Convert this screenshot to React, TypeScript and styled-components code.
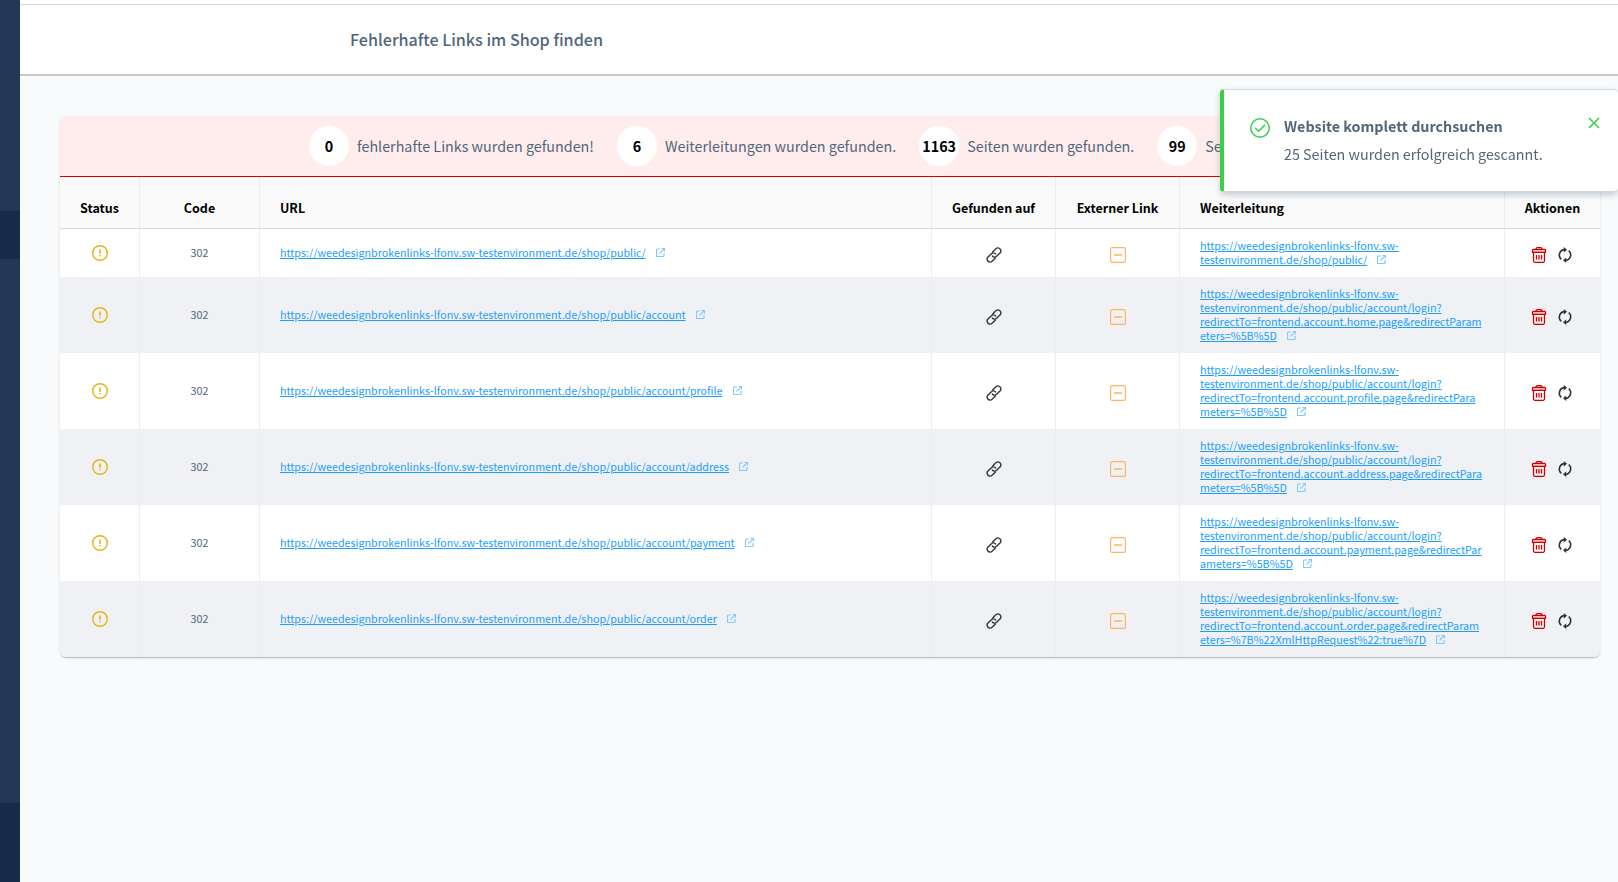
import React from 'react';
import styled, { createGlobalStyle, css } from 'styled-components';

const GlobalStyle = createGlobalStyle`
  *, *::before, *::after { box-sizing: border-box; }
  body {
    margin: 0;
    background: #f9fafb;
    color: #52667a;
    font-family: "Source Sans Pro", "Noto Sans CJK SC", sans-serif;
    font-size: 16px;
    font-size-adjust: 0.486;
    line-height: 20px;
  }
  button {
    font: inherit;
    border: 0;
    padding: 0;
    background: none;
    cursor: pointer;
  }
`;

const Shell = styled.div`
  display: flex;
  min-height: 100vh;
`;

const Sidebar = styled.nav`
  flex: none;
  display: flex;
  flex-direction: column;
  width: 20px;
  background: #243758;
`;

const SidebarGroup = styled.div`
  height: 211px;
`;

const SidebarActive = styled.div`
  height: 48px;
  background: #182b4d;
`;

const SidebarFooter = styled.div`
  height: 79px;
  margin-top: auto;
  background: #182b4d;
`;

const Main = styled.main`
  flex: 1;
  min-width: 0;
  background: #f9fafc;
`;

const SearchBar = styled.div`
  height: 5px;
  background: #fff;
  border-bottom: 1px solid #d1d9e0;
`;

const PageHeader = styled.header`
  display: flex;
  align-items: center;
  height: 71px;
  padding: 0 0 2px 330px;
  background: #fff;
  border-bottom: 2px solid #c8c8ca;
`;

const PageTitle = styled.h1`
  margin: 0;
  font-size: 18px;
  font-weight: 500;
  line-height: 24px;
`;

const Content = styled.div`
  padding: 40px 18px 40px 40px;
`;

const Card = styled.section`
  overflow: hidden;
  background: #fff;
  border-radius: 6px;
  box-shadow: 0 1px 1px rgba(0, 0, 0, 0.1), 0 2px 1px -1px rgba(0, 0, 0, 0.12), 0 1px 3px rgba(0, 0, 0, 0.1);
`;

const Summary = styled.ul`
  display: flex;
  gap: 23px;
  margin: 0;
  padding: 10px 0 10px 249px;
  list-style: none;
  white-space: nowrap;
  background: #ffeded;
  border-bottom: 1px solid #cc0000;
`;

const SummaryItem = styled.li`
  display: flex;
  align-items: center;
  gap: 8px;
`;

const Count = styled.strong`
  display: flex;
  align-items: center;
  justify-content: center;
  width: 40px;
  height: 40px;
  color: #000;
  background: #fff;
  border-radius: 50%;
`;

const Table = styled.table`
  width: 100%;
  table-layout: fixed;
  border-collapse: separate;
  border-spacing: 0;
  font-size: 12px;
  line-height: 14px;
`;

const Column = styled.col<{ $width?: number }>`
  ${({ $width }) => $width && css`width: ${$width}px;`}
`;

const cellBorder = css`
  border-right: 1px solid #ebedf0;
  &:last-child { border-right: 0; }
`;

const HeadCell = styled.th<{ $left?: boolean }>`
  ${cellBorder}
  height: 52px;
  padding: 10px 0 0 ${({ $left }) => ($left ? 20 : 0)}px;
  color: #000;
  background: #fafafa;
  border-bottom: 1px solid #d1d9e0;
  font-size: 14px;
  font-weight: 700;
  line-height: 20px;
  text-align: ${({ $left }) => ($left ? 'left' : 'center')};
`;

const Row = styled.tr`
  &:nth-child(even) { background: #f0f1f5; }
`;

const Cell = styled.td`
  ${cellBorder}
  padding: 10px 20px;
  vertical-align: middle;
  overflow-wrap: anywhere;
`;

const CenterCell = styled(Cell)`
  padding: 0;
  text-align: center;
`;

const IconCell = styled(CenterCell)<{ $low?: boolean }>`
  padding-top: ${({ $low }) => ($low ? 4 : 0)}px;
  svg { display: block; margin: 0 auto; }
`;

const Actions = styled.div`
  display: flex;
  justify-content: center;
  gap: 10px;
  padding-right: 1px;
`;

const IconButton = styled.button`
  display: block;
  width: 16px;
  height: 16px;
  margin: 0 auto;
  ${Actions} & { margin: 0; }
`;

const Link = styled.a`
  color: #189eff;
  text-decoration: underline;
`;

const ExternalSvg = styled.svg`
  margin-left: 10px;
`;

const Toast = styled.aside`
  position: fixed;
  top: 89px;
  right: 0;
  display: flex;
  align-items: flex-start;
  width: 398px;
  height: 103px;
  padding: 22px 18px 0 26px;
  background: #fff;
  border: 1px solid #d1d9e0;
  border-left: 4px solid #37d046;
  border-right: 0;
  border-radius: 4px;
  box-shadow: 0 3px 6px rgba(120, 138, 155, 0.4);
`;

const ToastIcon = styled.svg`
  flex: none;
  margin-top: 6px;
`;

const ToastBody = styled.div`
  flex: 1;
  margin-left: 14px;
  line-height: 28px;
`;

const ToastTitle = styled.strong`
  display: block;
`;

const ToastText = styled.p`
  margin: 0;
`;

const ToastClose = styled.button`
  margin-top: 5px;
  svg { display: block; }
`;

const WarningIcon = () => (
  <svg width="16" height="16" viewBox="0 0 16 16" fill="none" aria-label="Weiterleitung">
    <circle cx="8" cy="8" r="7.3" stroke="#e3b40f" strokeWidth="1.4" />
    <path d="M8 4.6v4.2" stroke="#e3b40f" strokeWidth="1.6" />
    <path d="M8 10v1.3" stroke="#e3b40f" strokeWidth="1.6" />
  </svg>
);

const ChainIcon = () => (
  <svg width="16" height="16" viewBox="0 0 16 16" fill="none" stroke="#36373a" strokeWidth="1.4" strokeLinecap="round">
    <path d="M6.6 5 9.9 1.7a2.7 2.7 0 0 1 4.2.3 2.9 2.9 0 0 1-.1 3.9L10.6 9.300a2.700 2.700 0 0 1-4.200-.3" />
    <path d="M9.400 11 6.100 14.300a2.700 2.700 0 0 1-4.200-.3 2.900 2.900 0 0 1 .1-3.900L5.400 6.700a2.700 2.700 0 0 1 4.200.3" />
  </svg>
);

const MinusBoxIcon = () => (
  <svg width="16" height="16" viewBox="0 0 16 16" fill="none" stroke="#ffb55e" aria-label="Nein">
    <rect x="0.6" y="0.6" width="14.8" height="14.8" rx="1.6" strokeWidth="1.2" />
    <path d="M4 8h8" strokeWidth="1.5" />
  </svg>
);

const TrashIcon = () => (
  <svg width="16" height="16" viewBox="0 0 16 16" fill="none" stroke="#cc0000" strokeWidth="1.3" strokeLinejoin="round">
    <path d="M2.500 5.3h11v8.500a1.500 1.500 0 0 1-1.500 1.500H4a1.500 1.500 0 0 1-1.500-1.500z" />
    <path d="M2.4 2.4h11.2a.9.9 0 0 1 .9.9v2h-13v-2a.9.9 0 0 1 .9-.9z" fill="#f5bcbc" />
    <path d="M5 2.2c0-1 .5-1.5 1.4-1.5h3.2c.9 0 1.4.5 1.4 1.5" />
    <path d="M5.5 8v4.6M8 8v4.6M10.5 8v4.6" />
  </svg>
);

const RefreshIcon = () => (
  <svg width="16" height="16" viewBox="0 0 16 16" fill="none">
    <path d="M4.300 12.300A5.500 5.500 0 0 1 7.800 2.600M11.700 3.700a5.500 5.500 0 0 1-3.500 9.700" stroke="#303134" strokeWidth="1.6" />
    <path d="M6.800 0l3.200 2.700-3.200 2.900zM9.200 10.400V16L6 13.300z" fill="#303134" />
  </svg>
);

const ExternalIcon = () => (
  <ExternalSvg width="9" height="9" viewBox="0 0 9 9" fill="none" stroke="#84c9fb" strokeWidth="1.2">
    <path d="M4 1H1.3a.8.8 0 0 0-.8.8v5.9a.8.8 0 0 0 .8.8h5.9a.8.8 0 0 0 .8-.8V5" />
    <path d="M5.5.5h3v3M8.3.7 3.5 5.5" />
  </ExternalSvg>
);

const CheckCircleIcon = () => (
  <ToastIcon width="20" height="20" viewBox="0 0 20 20" fill="none" stroke="#37d046" strokeWidth="1.5">
    <circle cx="10" cy="10" r="9.2" />
    <path d="M5.5 10.2l3.1 3.1 5.9-5.9" strokeLinecap="round" strokeLinejoin="round" />
  </ToastIcon>
);

const CloseIcon = () => (
  <svg width="12" height="12" viewBox="0 0 12 12" fill="none" stroke="#37d046" strokeWidth="1.6">
    <path d="M1 1l10 10M11 1L1 11" />
  </svg>
);

const BASE = 'https://weedesignbrokenlinks-lfonv.sw-testenvironment.de/shop/public/';

const summary = [
  { count: 0, label: 'fehlerhafte Links wurden gefunden!' },
  { count: 6, label: 'Weiterleitungen wurden gefunden.' },
  { count: 1163, label: 'Seiten wurden gefunden.' },
  { count: 99, label: 'Seiten' },
];

const login = (page: string, params: string) =>
  `account/login?redirectTo=frontend.account.${page}.page&redirectParameters=${params}`;

const links = [
  { path: '', target: '' },
  { path: 'account', target: login('home', '%5B%5D') },
  { path: 'account/profile', target: login('profile', '%5B%5D') },
  { path: 'account/address', target: login('address', '%5B%5D') },
  { path: 'account/payment', target: login('payment', '%5B%5D') },
  { path: 'account/order', target: login('order', '%7B%22XmlHttpRequest%22:true%7D') },
];

const ExternalLink = ({ url }: { url: string }) => (
  <>
    <Link href={url}>{url}</Link>
    <ExternalIcon />
  </>
);

export default function App() {
  return (
    <>
      <GlobalStyle />
      <Shell>
        <Sidebar>
          <SidebarGroup />
          <SidebarActive />
          <SidebarFooter />
        </Sidebar>
        <Main>
          <SearchBar />
          <PageHeader>
            <PageTitle>Fehlerhafte Links im Shop finden</PageTitle>
          </PageHeader>
          <Content>
            <Card>
              <Summary>
                {summary.map(({ count, label }) => (
                  <SummaryItem key={label}>
                    <Count>{count}</Count>
                    <span>{label}</span>
                  </SummaryItem>
                ))}
              </Summary>
              <Table>
                <colgroup>
                  <Column $width={80} />
                  <Column $width={120} />
                  <Column />
                  <Column $width={124} />
                  <Column $width={124} />
                  <Column $width={325} />
                  <Column $width={95} />
                </colgroup>
                <thead>
                  <tr>
                    <HeadCell>Status</HeadCell>
                    <HeadCell>Code</HeadCell>
                    <HeadCell $left>URL</HeadCell>
                    <HeadCell>Gefunden auf</HeadCell>
                    <HeadCell>Externer Link</HeadCell>
                    <HeadCell $left>Weiterleitung</HeadCell>
                    <HeadCell>Aktionen</HeadCell>
                  </tr>
                </thead>
                <tbody>
                  {links.map(({ path, target }) => (
                    <Row key={path}>
                      <IconCell><WarningIcon /></IconCell>
                      <CenterCell>302</CenterCell>
                      <Cell><ExternalLink url={BASE + path} /></Cell>
                      <IconCell $low>
                        <IconButton type="button" aria-label="Gefunden auf"><ChainIcon /></IconButton>
                      </IconCell>
                      <IconCell $low><MinusBoxIcon /></IconCell>
                      <Cell><ExternalLink url={BASE + target} /></Cell>
                      <IconCell $low>
                        <Actions>
                          <IconButton type="button" aria-label="Löschen"><TrashIcon /></IconButton>
                          <IconButton type="button" aria-label="Erneut prüfen"><RefreshIcon /></IconButton>
                        </Actions>
                      </IconCell>
                    </Row>
                  ))}
                </tbody>
              </Table>
            </Card>
          </Content>
        </Main>
      </Shell>
      <Toast role="status">
        <CheckCircleIcon />
        <ToastBody>
          <ToastTitle>Website komplett durchsuchen</ToastTitle>
          <ToastText>25 Seiten wurden erfolgreich gescannt.</ToastText>
        </ToastBody>
        <ToastClose type="button" aria-label="Schließen"><CloseIcon /></ToastClose>
      </Toast>
    </>
  );
}
